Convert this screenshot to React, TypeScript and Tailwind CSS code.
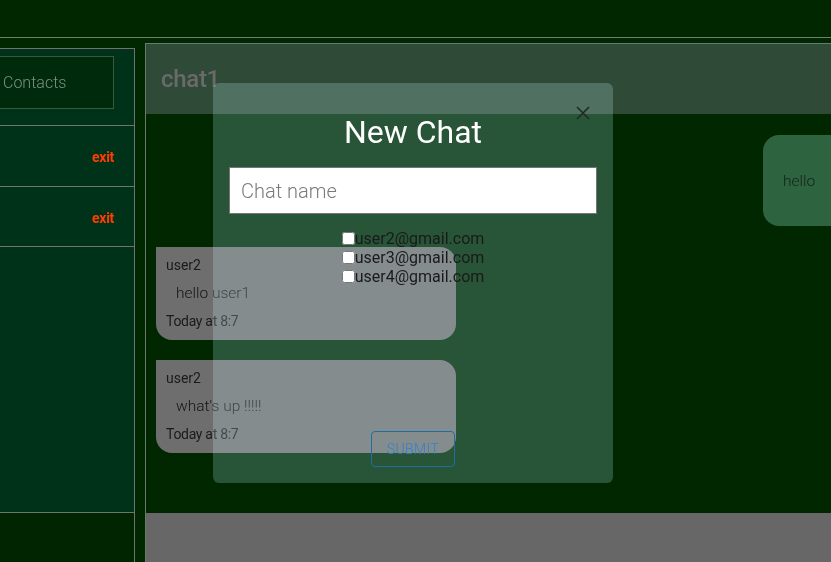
import React from "react";

const users = ["user2@gmail.com", "user3@gmail.com", "user4@gmail.com"];

function Bubble({ text }: { text: string }) {
  return (
    <div className="w-[300px] h-[93px] shrink-0 bg-[#6e6e6e] rounded-[16px] rounded-tl-none pl-[10px] pt-[9px] flex flex-col">
      <span className="text-[14px] leading-[18px] text-[#1a1a1a]">user2</span>
      <span className="mt-[9px] pl-[10px] text-[15.5px] leading-[20px] font-light text-[#141414]">
        {text}
      </span>
      <span className="mt-[10px] text-[14px] leading-[16px] text-[#1a1a1a] tracking-[-0.3px]">Today at 8:7</span>
    </div>
  );
}

export default function App() {
  return (
    <div className="relative w-[831px] h-[562px] overflow-hidden bg-[#002700] font-['Roboto',sans-serif] flex flex-col">
      <div className="h-[38px] shrink-0 border-b border-[#6e7e6e]" />

      <div className="flex flex-1 min-h-0">
        {/* sidebar */}
        <aside className="-ml-[15px] w-[150px] shrink-0 mt-[10px] border-t border-r border-[#727272] flex flex-col">
          <div className="flex-1 bg-[#00321a] flex flex-col">
            <div className="h-[77px] border-b border-[#727272] pt-[7px]">
              <div className="ml-[2px] mr-[20px] h-[53px] border border-[#3b5a3b] bg-[#002a0c] flex items-center pl-[15px] text-[16px] font-light text-[#7f8f7f]">
                Contacts
              </div>
            </div>
            <div className="h-[61px] border-b border-[#727272] flex items-center justify-end pr-[20px] pt-[3px]">
              <span className="text-[14px] font-bold text-[#ff3d00] tracking-[-0.3px]">exit</span>
            </div>
            <div className="h-[60px] border-b border-[#727272] flex items-center justify-end pr-[20px] pt-[3px]">
              <span className="text-[14px] font-bold text-[#ff3d00] tracking-[-0.3px]">exit</span>
            </div>
          </div>
          <div className="h-[50px] shrink-0 border-t border-[#727272] bg-[#002500]" />
        </aside>

        {/* chat panel */}
        <main className="ml-[10px] mt-[5px] flex-1 min-w-0 border-t border-l border-[#6b7b6b] flex flex-col">
          <div className="h-[70px] shrink-0 bg-[#2f4a37] flex items-center pl-[15px]">
            <span className="text-[24px] font-medium text-[#6a6a6a] tracking-[-0.3px]">chat1</span>
          </div>
          <div className="flex-1 flex flex-col pt-[21px] pl-[10px] gap-[20px]">
            <div className="self-end -mr-[22px] w-[90px] h-[91px] shrink-0 bg-[#2d633f] rounded-[16px] flex items-center pl-[20px] pt-[2px] text-[15.5px] font-light text-[#16221a]">
              hello
            </div>
            <div className="mt-[1px]">
              <Bubble text="hello user1" />
            </div>
            <Bubble text="what's up !!!!!" />
          </div>
          <div className="h-[49px] shrink-0 bg-[#676767]" />
        </main>
      </div>

      {/* new chat modal */}
      <div className="absolute left-[213px] top-[83px] w-[400px] h-[400px]">
        <div className="absolute inset-0 rounded-[6px] bg-[#283537] mix-blend-screen" />
        <div className="relative h-full flex flex-col px-[16px] pb-[16px]">
          <button className="absolute right-[23px] top-[23px] w-[14px] h-[14px]">
            <svg viewBox="0 0 14 14" width="14" height="14">
              <path d="M1 1 L13 13 M13 1 L1 13" stroke="#1f2a22" strokeWidth="1.6" fill="none" />
            </svg>
          </button>
          <h2 className="mt-[31px] text-center text-[32px] leading-[37px] text-white">New Chat</h2>
          <input
            type="text"
            placeholder="Chat name"
            className="mt-[16px] h-[47px] w-full bg-white border border-[#767676] px-[11px] text-[20px] font-light text-[#333] placeholder:text-[#7a7a7a] outline-none"
          />
          <div className="mt-[15px] flex flex-col items-center">
            {users.map((u) => (
              <label key={u} className="flex items-center h-[19px] text-[16px] text-[#1a1a1a]">
                <input type="checkbox" className="m-0 w-[13px] h-[13px]" readOnly />
                <span>{u}</span>
              </label>
            ))}
          </div>
          <button className="mt-auto self-center w-[84px] h-[36px] rounded-[4px] border border-[#1e6fa0] text-[14px] font-light tracking-[0.4px] text-[#2f80d0] uppercase">
            Submit
          </button>
        </div>
      </div>
    </div>
  );
}
